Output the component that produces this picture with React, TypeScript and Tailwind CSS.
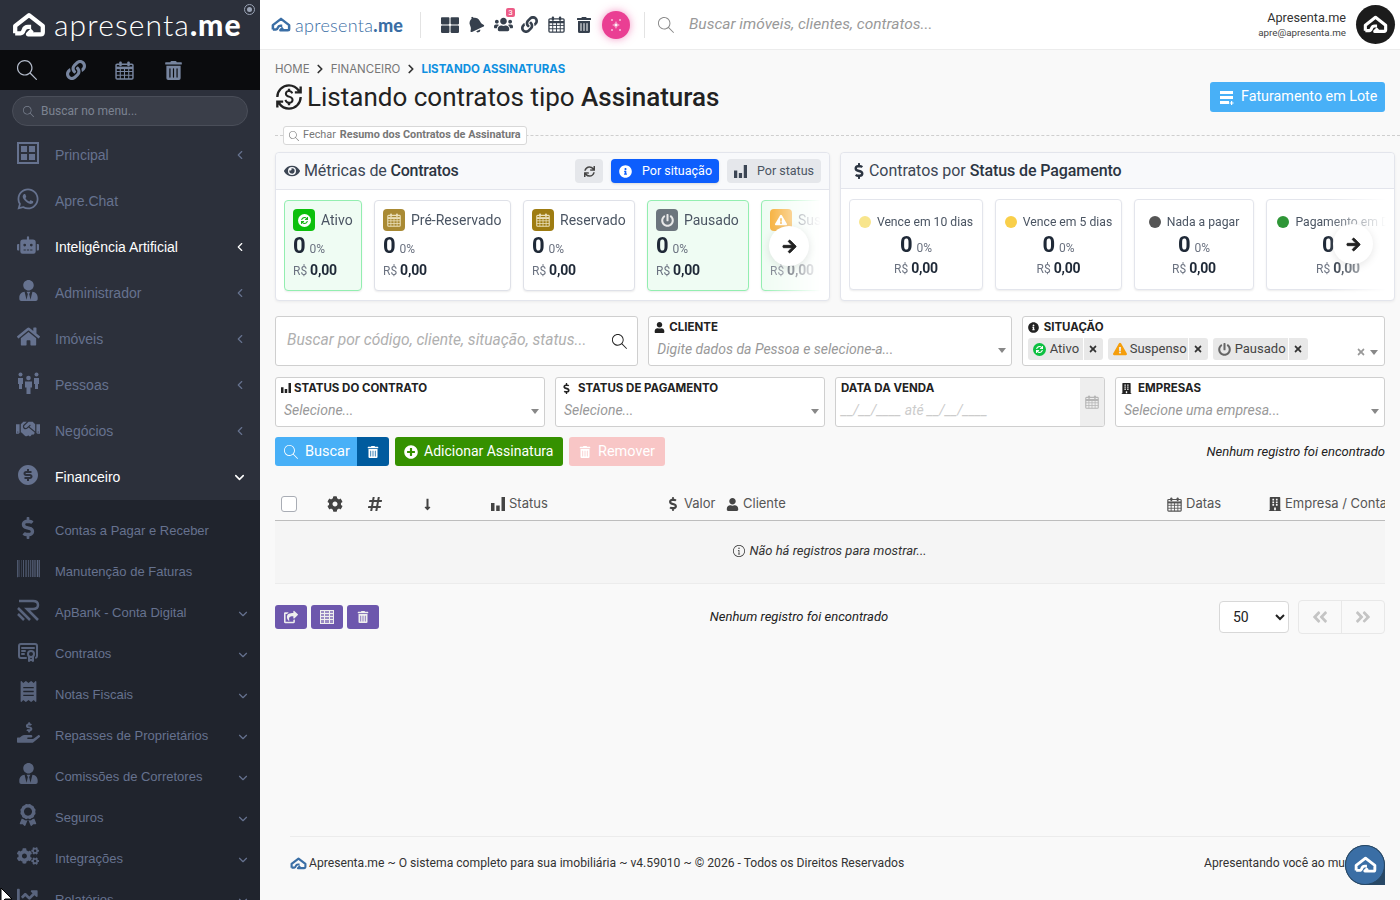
import type { ReactNode } from "react";
import {
  FaWhatsapp, FaRobot, FaUserTie, FaHome, FaHandshake, FaDollarSign, FaBarcode, FaReceipt,
  FaHandHoldingUsd, FaAward, FaCogs, FaChartLine, FaLink, FaTrashAlt, FaBell, FaUsers,
  FaThLarge, FaEye, FaSync, FaInfoCircle, FaArrowRight, FaUser, FaBuilding, FaPlusCircle,
  FaExclamationTriangle, FaPowerOff, FaTimes, FaCog, FaHashtag, FaLongArrowAltDown, FaShareSquare,
  FaAngleDoubleLeft, FaAngleDoubleRight,
} from "react-icons/fa";
import { MdCurrencyExchange } from "react-icons/md";
import { RiMoneyDollarCircleFill } from "react-icons/ri";
import { SlMagnifier, SlInfo } from "react-icons/sl";
import { TbCertificate } from "react-icons/tb";
import { LuChevronLeft, LuChevronDown, LuChevronRight } from "react-icons/lu";

const roboto = "font-['Roboto','Liberation_Sans',sans-serif]";
const arial = "font-['Liberation_Sans',Arial,sans-serif]";
const mont = "font-['Inter','Open_Sans',sans-serif]";

function HouseLogo({ size = 34, className = "" }: { size?: number; className?: string }) {
  return (
    <svg width={size} height={size * 0.75} viewBox="0 0 32 24" fill="none" className={className}>
      <path
        d="M3 20v-7L16 3l13 10v6q0 2-2 2H15l4-4"
        stroke="currentColor"
        strokeWidth="4"
        strokeLinejoin="round"
      />
      <path d="M3 20h5q2 0 3-3t4-3h3" stroke="currentColor" strokeWidth="4" />
    </svg>
  );
}

function GridBox() {
  return (
    <svg width="22" height="22" viewBox="0 0 22 22" fill="currentColor">
      <path fillRule="evenodd" d="M0 0h22v22H0zM2 2v18h18V2z" />
      <path d="M4 4h6v6H4zM12 4h6v6h-6zM4 12h6v6H4zM12 12h6v6h-6z" />
    </svg>
  );
}

function ApBankIcon() {
  return (
    <svg width="23" height="22" viewBox="0 0 23 22" fill="none" stroke="currentColor" strokeWidth="2.5">
      <path d="M2 2h14q5 0 5 4t-5 4h-6l11 11" />
      <path d="M1 9l12 12M1 15l6 6" />
    </svg>
  );
}

function PeopleIcon() {
  return (
    <svg width="23" height="22" viewBox="0 0 23 22" fill="currentColor">
      <circle cx="3.5" cy="2.5" r="2" />
      <path d="M1 6h5v6H5v5H2v-5H1z" />
      <circle cx="19.5" cy="2.5" r="2" />
      <path d="M17 6h5v6h-1v5h-3v-5h-1z" />
      <circle cx="11.5" cy="6" r="2.3" />
      <path d="M8 9.5h7v6h-1.5V22h-4v-6.5H8z" />
    </svg>
  );
}

function CalendarIcon({ size = 18, className = "" }: { size?: number; className?: string }) {
  return (
    <svg width={size} height={size} viewBox="0 0 18 18" fill="none" className={className}>
      <rect x="1" y="3" width="16" height="14" rx="1" stroke="currentColor" strokeWidth="1.4" />
      <path d="M1 6.5h16" stroke="currentColor" strokeWidth="2.4" />
      <path d="M5 7v10M9 7v10M13 7v10M1 10h16M1 13.5h16" stroke="currentColor" strokeWidth="1" />
      <rect x="4" y="0.5" width="2.4" height="4.5" rx="1" fill="currentColor" />
      <rect x="11.6" y="0.5" width="2.4" height="4.5" rx="1" fill="currentColor" />
    </svg>
  );
}

function BarsIcon({ size = 13, className = "" }: { size?: number; className?: string }) {
  return (
    <svg width={size} height={size} viewBox="0 0 14 14" fill="currentColor" className={className}>
      <path d="M0 6h3.5v8H0zM5.2 8.5h3.5V14H5.2zM10.5 0H14v14h-3.5z" />
    </svg>
  );
}

function SparkIcon() {
  return (
    <svg width="14" height="14" viewBox="0 0 14 14" fill="currentColor">
      <path d="M7 3l1.4 2.6L11 7 8.4 8.4 7 11 5.6 8.4 3 7l2.6-1.4z" fillOpacity="0.45" />
      <path d="M3 1l1 1-1 1-1-1zM11 1l1 1-1 1-1-1zM3 11l1 1-1 1-1-1zM11 11l1 1-1 1-1-1zM7 5.5L8.5 7 7 8.5 5.5 7z" />
    </svg>
  );
}

function ListPlusIcon() {
  return (
    <svg width="16" height="15" viewBox="0 0 16 15" fill="currentColor">
      <path d="M1 1h13v3H1zM1 6h13v3H1zM1 11h9v3H1zM12 11h1.2v1.4h1.4v1.2h-1.4V15H12v-1.4h-1.4v-1.2H12z" />
    </svg>
  );
}

function SheetIcon() {
  return (
    <svg width="14" height="14" viewBox="0 0 14 14" fill="none" stroke="currentColor">
      <rect x="0.5" y="0.5" width="13" height="13" fill="currentColor" fillOpacity="0.35" />
      <path d="M0 3.5h14M0 6.5h14M0 9.5h14M4.5 0v14M9.5 0v14" strokeWidth="1" />
    </svg>
  );
}

type NavItem = { label: string; icon: ReactNode; active?: boolean; open?: boolean; noArrow?: boolean };

const navItems: NavItem[] = [
  { label: "Principal", icon: <GridBox /> },
  { label: "Apre.Chat", icon: <FaWhatsapp size={24} />, noArrow: true },
  { label: "Inteligência Artificial", icon: <FaRobot size={22} />, active: true },
  { label: "Administrador", icon: <FaUserTie size={21} /> },
  { label: "Imóveis", icon: <FaHome size={23} /> },
  { label: "Pessoas", icon: <PeopleIcon /> },
  { label: "Negócios", icon: <FaHandshake size={24} /> },
  { label: "Financeiro", icon: <RiMoneyDollarCircleFill size={26} />, active: true, open: true },
];

const subItems: { label: string; icon: ReactNode; noArrow?: boolean }[] = [
  { label: "Contas a Pagar e Receber", icon: <FaDollarSign size={22} />, noArrow: true },
  { label: "Manutenção de Faturas", icon: <FaBarcode size={23} />, noArrow: true },
  { label: "ApBank - Conta Digital", icon: <ApBankIcon /> },
  { label: "Contratos", icon: <TbCertificate size={24} /> },
  { label: "Notas Fiscais", icon: <FaReceipt size={21} /> },
  { label: "Repasses de Proprietários", icon: <FaHandHoldingUsd size={23} /> },
  { label: "Comissões de Corretores", icon: <FaUserTie size={21} /> },
  { label: "Seguros", icon: <FaAward size={22} /> },
  { label: "Integrações", icon: <FaCogs size={22} /> },
  { label: "Relatórios", icon: <FaChartLine size={22} /> },
];

function Sidebar() {
  return (
    <aside className={`w-[260px] shrink-0 h-full overflow-hidden bg-[#2c303b] ${arial}`}>
      {/* Logo */}
      <div className="h-[50px] flex items-center pl-[12px] relative text-white">
        <HouseLogo size={34} />
        <span className="ml-[8px] -mt-[3px] text-[30px] leading-none font-['Lato',sans-serif] font-light tracking-[1.1px]">
          apresenta<span className="font-black">.me</span>
        </span>
        <span className="absolute right-[5px] top-[4px] w-[11px] h-[11px] rounded-full border border-[#9aa3b5] flex items-center justify-center">
          <span className="w-[5px] h-[5px] rounded-full bg-[#9aa3b5]" />
        </span>
      </div>

      {/* Atalhos */}
      <div className="h-[40px] bg-[#0b0c0e] flex items-center pl-[17px] text-[#77859f]">
        <span className="w-[49px]"><SlMagnifier size={20} className="text-[#b4bccb]" /></span>
        <span className="w-[49px]"><FaLink size={20} /></span>
        <span className="w-[49px]"><CalendarIcon size={19} /></span>
        <span><FaTrashAlt size={19} /></span>
      </div>

      <div className="px-[12px] pt-[6px] pb-[6px]">
        <div className={`h-[30px] rounded-full bg-[#3a3e49] border border-[#4a4e59] flex items-center pl-[10px] gap-[7px] text-[12px] text-[#7c8391] ${roboto}`}>
          <SlMagnifier size={11} />
          Buscar no menu...
        </div>
      </div>

      <nav>
        {navItems.map((item) => (
          <div
            key={item.label}
            className={`h-[46px] flex items-center pl-[16px] pr-[13px] text-[14px] ${
              item.active ? "text-white" : "text-[#66728f]"
            }`}
          >
            <span className="w-[24px] mr-[15px] -mt-[5px] flex justify-center text-[#66728f]">{item.icon}</span>
            <span className="flex-1">{item.label}</span>
            {!item.noArrow &&
              (item.open ? <LuChevronDown size={15} strokeWidth={2.5} /> : <LuChevronLeft size={14} strokeWidth={2} />)}
          </div>
        ))}
      </nav>

      <div className="bg-[#20242d] pt-[10px]">
        {subItems.map((item) => (
          <div key={item.label} className="h-[41px] flex items-center pl-[16px] pr-[10px] text-[13px] text-[#66728f]">
            <span className="w-[24px] mr-[15px] -mt-[6px] flex justify-center text-[#59647d]">{item.icon}</span>
            <span className="flex-1">{item.label}</span>
            {!item.noArrow && <LuChevronDown size={14} className="mt-[2px]" />}
          </div>
        ))}
      </div>
    </aside>
  );
}

function Topbar() {
  return (
    <header className="h-[50px] shrink-0 bg-white border-b border-[#ececec] flex items-center pl-[11px] pr-[5px]">
      <span className="flex items-center text-[#3a6ea5] w-[134px]">
        <HouseLogo size={20} />
        <span className="ml-[4px] text-[18px] leading-none font-['Lato',sans-serif] font-light tracking-[0.3px]">
          apresenta<span className="font-black">.me</span>
        </span>
      </span>
      <span className="w-px h-[26px] bg-[#e3e3e3] ml-[15px]" />
      <div className="flex items-center text-[#36404d] ml-[21px]">
        <span className="w-[26px] -ml-[1px]"><FaThLarge size={18} /></span>
        <span className="w-[27px]"><FaBell size={17} className="-rotate-[25deg]" /></span>
        <span className="w-[27px] relative">
          <FaUsers size={19} />
          <span className="absolute -top-[7px] left-[12px] w-[9px] h-[9px] bg-[#ec5c87] rounded-[2px] text-white text-[8px] leading-[9px] text-center font-['Roboto',sans-serif]">3</span>
        </span>
        <span className="w-[27px]"><FaLink size={17} /></span>
        <span className="w-[27px]"><CalendarIcon size={17} /></span>
        <span className="w-[18px] ml-[1px]"><FaTrashAlt size={16} /></span>
      </div>
      <span className="ml-[8px] w-[28px] h-[28px] rounded-full bg-[#ea3f93] flex items-center justify-center text-white shadow-[0_0_8px_rgba(234,63,147,0.55)]">
        <SparkIcon />
      </span>
      <span className="w-px h-[26px] bg-[#e3e3e3] ml-[14px]" />
      <SlMagnifier size={16} className="ml-[13px] text-[#8a8a8a]" />
      <span className={`ml-[15px] flex-1 italic text-[15.5px] text-[#999] ${roboto}`}>Buscar imóveis, clientes, contratos...</span>
      <div className={`text-right mr-[10px] ${roboto}`}>
        <div className="text-[12.7px] leading-[16px] text-[#333]">Apresenta.me</div>
        <div className="text-[9.8px] leading-[14px] text-[#444]">apre@apresenta.me</div>
      </div>
      <span className="w-[39px] h-[39px] rounded-full bg-[#1c1c1c] flex items-center justify-center text-white">
        <HouseLogo size={25} />
      </span>
    </header>
  );
}

function Square({ bg, children }: { bg: string; children: ReactNode }) {
  return <span className={`w-[22px] h-[22px] rounded-[4px] flex items-center justify-center text-white shrink-0 ${bg}`}>{children}</span>;
}

type MetricCard = { label: string; w: string; icon: ReactNode; green?: boolean };

const ativoIcon = (
  <span className="w-[13px] h-[13px] rounded-full bg-white flex items-center justify-center text-[#10b010]">
    <FaSync size={7} />
  </span>
);

const metricCards: MetricCard[] = [
  { label: "Ativo", w: "w-[78px]", green: true, icon: <Square bg="bg-[#0cc00c]">{ativoIcon}</Square> },
  { label: "Pré-Reservado", w: "w-[137px]", icon: <Square bg="bg-[#a98a34]"><CalendarIcon size={14} className="text-[#eadfb8]" /></Square> },
  { label: "Reservado", w: "w-[112px]", icon: <Square bg="bg-[#9e7c12]"><CalendarIcon size={14} className="text-[#eadfb8]" /></Square> },
  { label: "Pausado", w: "w-[102px]", green: true, icon: <Square bg="bg-[#6c757d]"><FaPowerOff size={13} className="text-[#e8e8e8]" /></Square> },
  { label: "Suspenso", w: "w-[102px]", green: true, icon: <Square bg="bg-[#f5a623]"><FaExclamationTriangle size={12} /></Square> },
];

const payCards = [
  { label: "Vence em 10 dias", dot: "bg-[#f8e58c]", w: "w-[134px]" },
  { label: "Vence em 5 dias", dot: "bg-[#f9cf4a]", w: "w-[127px]" },
  { label: "Nada a pagar", dot: "bg-[#555555]", w: "w-[120px]" },
  { label: "Pagamento em Dia", dot: "bg-[#2f9637]", w: "w-[144px]" },
];

const fade = "[mask-image:linear-gradient(to_right,black_calc(100%-60px),transparent)]";

function ArrowBtn({ className }: { className: string }) {
  return (
    <span className={`absolute w-[40px] h-[40px] rounded-full bg-white shadow-[0_2px_8px_rgba(0,0,0,0.1)] flex items-center justify-center text-[#222] ${className}`}>
      <FaArrowRight size={15} stroke="currentColor" strokeWidth={30} />
    </span>
  );
}

function MetricsPanels() {
  return (
    <div className={`grid grid-cols-2 gap-[10px] -mr-[10px] mt-[7px] ${roboto}`}>
      <section className="h-[149px] bg-white border border-[#e3e5ec] rounded-[4px] shadow-[0_1px_3px_rgba(0,0,0,0.06)] relative">
        <div className="h-[37px] bg-[#f8f9fb] border-b border-[#e3e5ec] rounded-t-[4px] flex items-center pl-[8px] pr-[8px]">
          <FaEye size={16} className="text-[#3c4654] mr-[4px]" />
          <span className="text-[16px] text-[#3c4654] flex-1 tracking-[-0.1px]">
            Métricas de <span className="font-medium text-[#2c3542] tracking-[-0.25px]">Contratos</span>
          </span>
          <span className="w-[28px] h-[24px] rounded-[4px] bg-[#e5e7eb] flex items-center justify-center text-[#444] mr-[8px]">
            <FaSync size={11} />
          </span>
          <span className="w-[108px] h-[24px] rounded-[4px] bg-[#0d5efd] text-white text-[12.5px] flex items-center pl-[8px] gap-[10px] mr-[8px] shadow-sm">
            <FaInfoCircle size={13} /> Por situação
          </span>
          <span className="w-[94px] h-[24px] rounded-[4px] bg-[#e5e7eb] text-[#4b5563] text-[12.5px] flex items-center pl-[7px] gap-[10px]">
            <BarsIcon size={13} className="text-[#3c4654]" /> Por status
          </span>
        </div>
        <div className={`flex gap-[12px] ml-[8px] mr-[8px] mt-[10px] overflow-hidden ${fade} pb-[4px]`}>
          {metricCards.map((c) => (
            <div
              key={c.label}
              className={`${c.w} shrink-0 h-[91px] rounded-[4px] border px-[8px] pt-[8px] shadow-[0_1px_2px_rgba(0,0,0,0.08)] ${
                c.green ? "bg-[#effcf3] border-[#93eeb0]" : "bg-white border-[#dfe1e8]"
              }`}
            >
              <div className="flex items-center gap-[6px] text-[14px] text-[#4b5563] whitespace-nowrap">
                {c.icon} {c.label}
              </div>
              <div className="mt-[2px] leading-[26px] text-[#1f2937]">
                <span className="text-[22px] font-bold">0</span> <span className="text-[12px] text-[#6b7280]">0%</span>
              </div>
              <div className="leading-[16px] text-[#1f2937] whitespace-nowrap">
                <span className="text-[12px] text-[#6b7280]">R$</span> <span className="text-[14px] font-bold -ml-[1px] tracking-[-0.2px]">0,00</span>
              </div>
            </div>
          ))}
        </div>
        <ArrowBtn className="left-[493px] top-[73px]" />
      </section>

      <section className="h-[149px] bg-white border border-[#e3e5ec] rounded-[4px] shadow-[0_1px_3px_rgba(0,0,0,0.06)] relative">
        <div className="h-[36px] bg-[#f8f9fb] border-b border-[#e3e5ec] rounded-t-[4px] flex items-center pl-[10px]">
          <FaDollarSign size={16} className="text-[#2c3542] mr-[2px]" />
          <span className="text-[16px] text-[#3c4654] tracking-[-0.05px]">
            Contratos por <span className="font-medium text-[#2c3542] tracking-[-0.1px]">Status de Pagamento</span>
          </span>
        </div>
        <div className={`flex gap-[12px] ml-[8px] mr-[8px] mt-[10px] overflow-hidden ${fade} pb-[4px]`}>
          {payCards.map((c) => (
            <div key={c.label} className={`${c.w} shrink-0 h-[91px] rounded-[4px] bg-white border border-[#e3e5ec] pt-[13px] text-center shadow-[0_1px_2px_rgba(0,0,0,0.08)]`}>
              <div className="flex items-center justify-center gap-[6px] text-[12.2px] text-[#4b5563] whitespace-nowrap">
                <span className={`w-[12px] h-[12px] rounded-full ${c.dot}`} />
                {c.label}
              </div>
              <div className="mt-[1px] leading-[26px] text-[#1f2937]">
                <span className="text-[22px] font-bold">0</span> <span className="text-[12px] text-[#6b7280]">0%</span>
              </div>
              <div className="leading-[14px] text-[#1f2937]">
                <span className="text-[12px] text-[#6b7280]">R$</span> <span className="text-[14px] font-bold -ml-[1px] tracking-[-0.2px]">0,00</span>
              </div>
            </div>
          ))}
        </div>
        <ArrowBtn className="left-[492px] top-[71px]" />
      </section>
    </div>
  );
}

function Caret() {
  return <span className="w-0 h-0 border-x-[4.5px] border-x-transparent border-t-[5px] border-t-[#888]" />;
}

function Field({ label, icon, placeholder }: { label: string; icon?: ReactNode; placeholder: string }) {
  return (
    <div className="h-[50px] bg-white border border-[#cfcfcf] rounded-[3px] relative px-[5px] pt-[2px] overflow-hidden">
      <div className={`flex items-center gap-[3px] text-[11.5px] font-bold text-[#222] leading-[16px] ${mont}`}>
        {icon}
        <span>{label}</span>
      </div>
      <div className="mt-[4px] pl-[3px] text-[14px] leading-[20px] italic text-[#999]">{placeholder}</div>
      <span className="absolute right-[5px] top-[31px] flex"><Caret /></span>
    </div>
  );
}

function Chip({ icon, label, w }: { icon: ReactNode; label: string; w: string }) {
  return (
    <span className={`${w} h-[22px] rounded-[3px] bg-[#e8e8e8] flex items-center pl-[5px] text-[13px] text-[#444]`}>
      <span className="flex w-[16px]">{icon}</span>
      <span className="flex-1 ml-[1px]">{label}</span>
      <span className="w-[20px] h-full border-l border-white flex items-center justify-center text-[#333]">
        <FaTimes size={10} />
      </span>
    </span>
  );
}

function Filters() {
  return (
    <div className={`mt-[15px] ${roboto}`}>
      <div className="grid grid-cols-3 gap-[10px]">
        <div className="h-[50px] bg-white border border-[#cfcfcf] rounded-[3px] flex items-center pl-[11px] pr-[10px]">
          <span className="flex-1 italic text-[15.6px] text-[#b0b0b0] whitespace-nowrap">Buscar por código, cliente, situação, status...</span>
          <SlMagnifier size={15} className="text-[#222]" />
        </div>
        <Field label="CLIENTE" icon={<FaUser size={11} className="mr-[1px]" />} placeholder="Digite dados da Pessoa e selecione-a..." />
        <div className="h-[50px] bg-white border border-[#cfcfcf] rounded-[3px] relative px-[5px] pt-[2px]">
          <div className={`flex items-center gap-[5px] text-[11.5px] font-bold text-[#222] leading-[16px] ${mont}`}>
            <FaInfoCircle size={11} /> SITUAÇÃO
          </div>
          <div className="flex gap-[5px] mt-[3px]">
            <Chip w="w-[75px]" label="Ativo" icon={<span className="w-[13px] h-[13px] rounded-full bg-[#0cc040] flex items-center justify-center text-white"><FaSync size={7} /></span>} />
            <Chip w="w-[100px]" label="Suspenso" icon={<FaExclamationTriangle size={14} className="text-[#f59e0b]" />} />
            <Chip w="w-[95px]" label="Pausado" icon={<FaPowerOff size={13} className="text-[#666]" />} />
          </div>
          <span className="absolute right-[6px] top-[30px] flex items-center gap-[4px] text-[#999]">
            <FaTimes size={10} /> <Caret />
          </span>
        </div>
      </div>

      <div className="grid grid-cols-4 gap-[10px] mt-[11px]">
        <Field label="STATUS DO CONTRATO" icon={<BarsIcon size={10} />} placeholder="Selecione..." />
        <Field label="STATUS DE PAGAMENTO" icon={<FaDollarSign size={11} className="mr-[3px]" />} placeholder="Selecione..." />
        <div className="h-[50px] bg-white border border-[#cfcfcf] rounded-[3px] flex overflow-hidden">
          <div className="flex-1 px-[5px] pt-[2px]">
            <div className={`text-[11.5px] font-bold text-[#222] leading-[16px] ${mont}`}>DATA DA VENDA</div>
            <div className="mt-[4px] text-[14px] leading-[20px] italic text-[#ccc]">__/__/____ até __/__/____</div>
          </div>
          <span className="w-[24px] bg-[#eeeeee] flex items-center justify-center text-[#b5b5b5]">
            <CalendarIcon size={14} />
          </span>
        </div>
        <Field label="EMPRESAS" icon={<FaBuilding size={11} className="mr-[3px]" />} placeholder="Selecione uma empresa..." />
      </div>

      <div className="flex items-center mt-[10px] text-[14.5px] text-white">
        <span className="w-[82px] h-[29px] bg-[#48b0f7] rounded-l-[3px] flex items-center pl-[9px] gap-[7px]">
          <SlMagnifier size={14} /> Buscar
        </span>
        <span className="w-[32px] h-[29px] bg-[#005b9e] rounded-r-[3px] flex items-center justify-center">
          <FaTrashAlt size={12} />
        </span>
        <span className="w-[168px] h-[29px] ml-[6px] bg-[#359100] rounded-[3px] flex items-center pl-[9px] gap-[6px] text-[14px]">
          <FaPlusCircle size={14} /> Adicionar Assinatura
        </span>
        <span className="w-[96px] h-[29px] ml-[6px] bg-[#f8c6c6] rounded-[3px] flex items-center pl-[10px] gap-[7px]">
          <FaTrashAlt size={12} /> Remover
        </span>
        <span className="ml-auto text-[13px] italic text-[#222]">Nenhum registro foi encontrado</span>
      </div>
    </div>
  );
}

function ResultsTable() {
  const th = "flex items-center gap-[3px] text-[13px] text-[#555] whitespace-nowrap";
  return (
    <div className={`mt-[24px] ${mont}`}>
      <div className="h-[31px] flex items-center border-b border-[#bdbdbd] overflow-hidden text-[#444] pb-[2px]">
        <span className="w-[40px] pl-[6px] shrink-0">
          <span className="block w-[16px] h-[16px] bg-white border border-[#a9adb5] rounded-[3px]" />
        </span>
        <span className="w-[40px] shrink-0 flex justify-center"><FaCog size={16} /></span>
        <span className="w-[40px] shrink-0 flex justify-center"><FaHashtag size={16} /></span>
        <span className="w-[96px] shrink-0 flex pl-[26px]"><FaLongArrowAltDown size={13} /></span>
        <span className={`w-[178px] shrink-0 ${th} gap-[4px]`}><BarsIcon size={14} className="text-[#444]" /> Status</span>
        <span className={`w-[59px] shrink-0 ${th} gap-[4px]`}><FaDollarSign size={14} className="text-[#444] -ml-[3px]" /> Valor</span>
        <span className={`w-[440px] shrink-0 ${th} gap-[4px]`}><FaUser size={13} className="text-[#444] -ml-[2px]" /> Cliente</span>
        <span className={`w-[102px] shrink-0 ${th} -ml-[1px] gap-[4px]`}><CalendarIcon size={15} className="text-[#555]" /> Datas</span>
        <span className={`${th} -ml-[1px]`}><FaBuilding size={14} className="text-[#444]" /> Empresa / Conta</span>
      </div>
      <div className={`h-[63px] bg-[#f5f5f5] border-b border-[#ececec] flex items-center justify-center gap-[4px] text-[13px] italic text-[#333] ${roboto} pb-[3px]`}>
        <SlInfo size={12} /> Não há registros para mostrar...
      </div>
    </div>
  );
}

function TableFooter() {
  return (
    <div className={`flex items-center mt-[16px] ${roboto}`}>
      <div className="flex gap-[4px] text-[#eee]">
        <span className="w-[32px] h-[24px] rounded-[3px] bg-[#6d57ad] flex items-center justify-center"><FaShareSquare size={14} /></span>
        <span className="w-[32px] h-[24px] rounded-[3px] bg-[#6d57ad] flex items-center justify-center"><SheetIcon /></span>
        <span className="w-[32px] h-[24px] rounded-[3px] bg-[#6d57ad] flex items-center justify-center"><FaTrashAlt size={12} /></span>
      </div>
      <span className="flex-1 text-center text-[13px] italic text-[#222]">Nenhum registro foi encontrado</span>
      <select defaultValue="50" className="w-[70px] h-[32px] bg-white border border-[#d8d8d8] rounded-[4px] pl-[9px] text-[14px] text-[#222]">
        <option value="50">50</option>
      </select>
      <div className="ml-[9px] w-[87px] h-[34px] border border-[#e8e8e8] rounded-[4px] flex text-[#c4c4c4]">
        <span className="flex-1 border-r border-[#e8e8e8] flex items-center justify-center"><FaAngleDoubleLeft size={18} /></span>
        <span className="flex-1 flex items-center justify-center"><FaAngleDoubleRight size={18} /></span>
      </div>
    </div>
  );
}

export default function App() {
  return (
    <div className="w-[1400px] h-[900px] flex overflow-hidden bg-[#f9f9f9] relative">
      <Sidebar />
      <main className="flex-1 min-w-0 flex flex-col">
        <Topbar />
        <div className="flex-1 px-[15px] overflow-hidden">
          <div className={`mt-[12px] flex items-center gap-[3.5px] text-[11.5px] leading-[14px] text-[#777] ${mont}`}>
            HOME <LuChevronRight size={14} strokeWidth={3} className="text-[#333]" />
            FINANCEIRO <LuChevronRight size={14} strokeWidth={3} className="text-[#333]" />
            <span className="font-bold text-[#0e90e0]">LISTANDO ASSINATURAS</span>
          </div>
          <div className="flex items-center mt-[5px]">
            <h1 className={`flex items-center gap-[4px] text-[26px] leading-[32px] text-[#222] ${roboto}`}>
              <MdCurrencyExchange size={28} />
              <span>Listando contratos tipo <span className="font-medium">Assinaturas</span></span>
            </h1>
            <span className={`ml-auto mt-[0px] w-[175px] h-[30px] bg-[#48b0f7] rounded-[3px] flex items-center pl-[9px] gap-[6px] text-[14.3px] text-white ${roboto}`}>
              <ListPlusIcon /> Faturamento em Lote
            </span>
          </div>

          <div className={`mt-[13px] h-[19px] relative flex items-center border-dashed -mr-[15px] ${roboto}`}>
            <span className="flex-1 border-t border-dashed border-[#cfcfcf]" />
            <span className="absolute left-[8px] top-0 h-[19px] px-[5px] bg-white border border-[#d8d8d8] rounded-[3px] flex items-center gap-[4px] text-[10.85px] text-[#777]">
              <SlMagnifier size={10} /> Fechar <span className="font-bold">Resumo dos Contratos de Assinatura</span>
            </span>
          </div>

          <MetricsPanels />
          <Filters />
          <ResultsTable />
          <TableFooter />
        </div>

        <footer className={`h-[64px] shrink-0 mx-[30px] border-t border-[#ececec] flex items-center text-[12.15px] text-[#333] ${roboto} pb-[10px]`}>
          <HouseLogo size={17} className="text-[#3a6ea5] mr-[2px]" />
          Apresenta.me ~ O sistema completo para sua imobiliária ~ v4.59010 ~ © 2026 - Todos os Direitos Reservados
          <span className="ml-auto -mr-[15px] w-[181px] whitespace-nowrap overflow-hidden">Apresentando você ao mundo</span>
        </footer>
      </main>

      {/* Botão flutuante */}
      <span className="absolute left-[1345px] top-[845px] w-[40px] h-[40px] bg-[#274866] rounded-br-[3px] rounded-tl-full rounded-bl-full rounded-tr-full">
        <span className="w-[40px] h-[40px] rounded-full bg-[#3a6ea5] border border-[#274866] flex items-center justify-center text-white">
          <HouseLogo size={23} />
        </span>
      </span>

      {/* Cursor */}
      <svg className="absolute left-0 top-[887px]" width="14" height="16" viewBox="0 0 14 16">
        <path d="M1 1v15l4-4h7z" fill="#fff" stroke="#000" strokeWidth="1" />
      </svg>
    </div>
  );
}
